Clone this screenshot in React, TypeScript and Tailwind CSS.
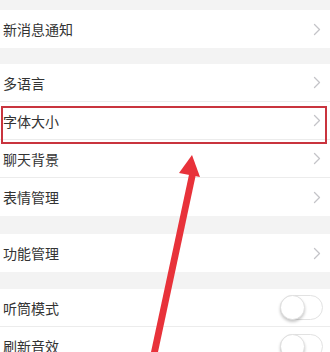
import React from "react";

const Chevron = () => (
  <svg width="8" height="13" viewBox="0 0 8 13" className="mr-[9px]">
    <path d="M1.5 1.5 L6.5 6.5 L1.5 11.5" fill="none" stroke="#c4c4c8" strokeWidth="1.3" strokeLinecap="round" strokeLinejoin="round" />
  </svg>
);

const Toggle = () => (
  <div className="relative mr-[7px] h-[25px] w-[43px] rounded-full border border-[#e2e2e2] bg-white">
    <div className="absolute left-[-1px] top-[-1px] h-[25px] w-[25px] rounded-full border border-[#e0e0e0] bg-white shadow-[0_2px_3px_rgba(0,0,0,0.22)]" />
  </div>
);

const Row = ({ label, last, toggle }: { label: string; last?: boolean; toggle?: boolean }) => (
  <div className={`flex h-[38px] items-center justify-between bg-white pl-[3px] ${last ? "" : "border-b border-[#ececec]"}`}>
    <span className="text-[14px] leading-none text-[#333333]">{label}</span>
    {toggle ? <Toggle /> : <Chevron />}
  </div>
);

export default function App() {
  return (
    <div
      className="relative h-[352px] w-[330px] overflow-hidden bg-[#f3f3f3]"
      style={{ fontFamily: '"Noto Sans CJK SC", "Noto Sans", sans-serif' }}
    >
      <div className="flex flex-col">
        <div className="h-[10px]" />
        <Row label="新消息通知" last />
        <div className="h-[16px]" />
        <Row label="多语言" />
        <Row label="字体大小" />
        <Row label="聊天背景" />
        <Row label="表情管理" last />
        <div className="h-[18px]" />
        <Row label="功能管理" last />
        <div className="h-[17px]" />
        <Row label="听筒模式" toggle />
        <Row label="刷新音效" toggle last />
      </div>

      {/* annotation box */}
      <div className="pointer-events-none absolute left-[1px] top-[106px] h-[38px] w-[326px] border-2 border-[#c9343e]" />

      {/* annotation arrow */}
      <svg className="pointer-events-none absolute left-0 top-0" width="330" height="352" viewBox="0 0 330 352">
        <polygon points="190,170 196,174 158,352 151,352" fill="#e8323a" />
        <polygon points="192,155 200,177 179,173" fill="#e8323a" />
      </svg>
    </div>
  );
}
